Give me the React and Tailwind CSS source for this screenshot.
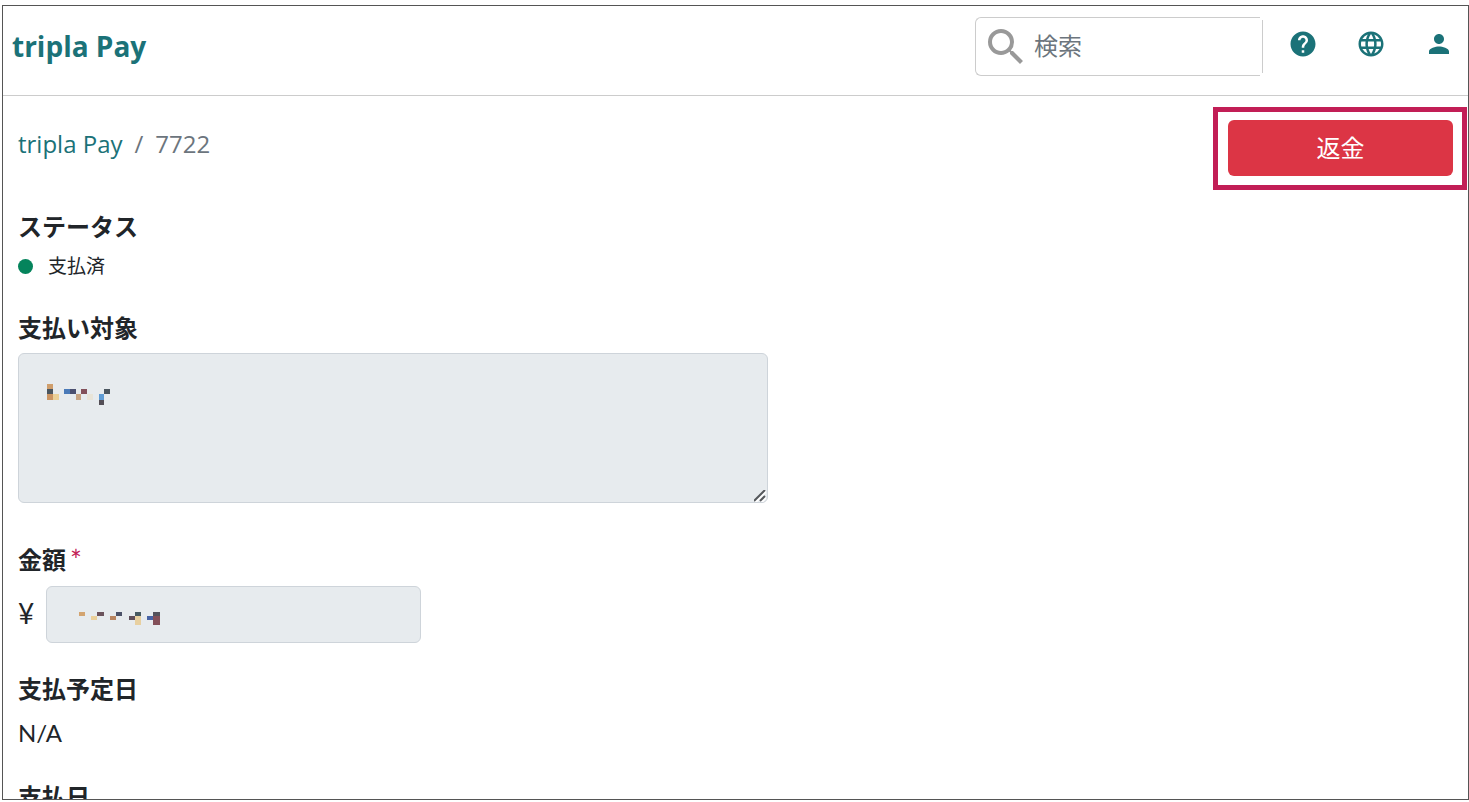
import React, { useState } from "react";
import { MdHelp, MdLanguage, MdPerson, MdSearch } from "react-icons/md";

// masked values: x, y, width, height, colour
const TARGET_MASK = [
  [0, 0, 6, 5, "#cf9e6c"],
  [0, 5, 6, 5, "#4a555f"],
  [0, 10, 6, 6, "#cb9563"],
  [6, 10, 6, 6, "#ebd098"],
  [17, 5, 6, 5, "#4a7ab8"],
  [23, 5, 6, 5, "#4b5070"],
  [29, 10, 5, 6, "#c8a482"],
  [34, 5, 6, 5, "#83505a"],
  [40, 10, 6, 6, "#e8e4d8"],
  [52, 10, 5, 6, "#5f9cd5"],
  [57, 5, 6, 5, "#4a555f"],
  [52, 16, 5, 5, "#534e56"],
];

const AMOUNT_MASK = [
  [0, 0, 6, 4, "#d3a470"],
  [12, 4, 6, 4, "#ebd09a"],
  [18, 0, 7, 4, "#6b535c"],
  [31, 4, 6, 4, "#b98560"],
  [37, 0, 6, 4, "#4b5268"],
  [50, 4, 6, 4, "#5f4e5a"],
  [56, 0, 6, 4, "#475a62"],
  [56, 4, 6, 9, "#e8d0a0"],
  [68, 4, 6, 4, "#4763a5"],
  [74, 0, 7, 4, "#54525c"],
  [74, 4, 7, 9, "#834f58"],
];

function Mask({ cells, className }) {
  return (
    <svg width="84" height="22" shapeRendering="crispEdges" aria-hidden="true" className={`absolute pointer-events-none ${className}`}>
      {cells.map(([x, y, w, h, fill]) => <rect key={`${x}-${y}`} x={x} y={y} width={w} height={h} fill={fill} />)}
    </svg>
  );
}

function IconButton({ label, icon: Icon }) {
  return (
    <button type="button" aria-label={label} className="text-[#1b7278]">
      <Icon size={30} />
    </button>
  );
}

function Header() {
  const [query, setQuery] = useState("");

  return (
    <header className="flex h-[90px] shrink-0 items-start justify-between border-b border-[#cccccc] pl-[9px] pr-[14px]">
      <a href="#" className="mt-[22px] font-['Open_Sans',sans-serif] text-[28px] leading-9 font-bold text-[#1b7278]">tripla Pay</a>
      <div className="flex items-start">
        <div className="mt-[11px] mr-[25px] flex items-center">
          <label className="flex h-[59px] w-[285px] items-center rounded-l-md border border-r-0 border-[#cccccc] pl-[6px]">
            <MdSearch size={48} className="shrink-0 text-[#999999]" />
            <input
              type="search"
              aria-label="検索"
              placeholder="検索"
              value={query}
              onChange={(e) => setQuery(e.target.value)}
              className="min-w-0 flex-1 pb-[2px] pl-1 text-2xl text-[#212529] outline-none placeholder:text-[#6c757d]"
            />
          </label>
          <span className="h-[53px] w-[3px] border-r border-[#cccccc]" />
        </div>
        <div className="mt-[23px] flex gap-[38px]">
          <IconButton label="ヘルプ" icon={MdHelp} />
          <IconButton label="言語" icon={MdLanguage} />
          <IconButton label="アカウント" icon={MdPerson} />
        </div>
      </div>
    </header>
  );
}

export default function App() {
  return (
    <div className="h-screen bg-white pt-[5px] pb-[2px] pl-[2px] font-[Lato,'Noto_Sans_CJK_JP',sans-serif] text-[#212529]">
      <div className="flex h-full flex-col overflow-hidden border border-[#555555]">
        <Header />
        <main className="pt-[11px] pl-[15px]">
          <div className="flex items-start justify-between pr-px">
            <nav aria-label="breadcrumb" className="mt-[19px] flex gap-3 font-['Open_Sans',sans-serif] text-2xl leading-9 text-[#6c757d]">
              <a href="#" className="text-[#1b7278]">tripla Pay</a>
              <span>/</span>
              <span>7722</span>
            </nav>
            <div className="border-[5px] border-[#c21e56] pt-2 pr-[9px] pb-[9px] pl-[10px]">
              <button type="button" className="h-14 w-[225px] rounded-md bg-[#dc3545] text-2xl text-white">返金</button>
            </div>
          </div>

          <h2 className="mt-[19px] text-2xl leading-9 font-bold">ステータス</h2>
          <p className="mt-[6px] flex items-center gap-[15px] text-[19px] leading-[30px]">
            <span className="size-[15px] rounded-full bg-[#05845c]" />
            支払済
          </p>

          <label htmlFor="target" className="mt-[29px] block text-2xl leading-9 font-bold">支払い対象</label>
          <div className="relative mt-[7px] w-fit">
            <textarea id="target" readOnly className="block h-[150px] w-[750px] resize-none rounded-md border border-[#ced4da] bg-[#e7ebee] px-7 py-6 text-2xl" />
            <Mask cells={TARGET_MASK} className="top-[31px] left-[29px]" />
            <svg width="12" height="12" aria-hidden="true" className="pointer-events-none absolute right-[2px] bottom-px">
              <path d="M1 12L12 1M7 12L12 7" stroke="#ffffff" strokeWidth="3" />
              <path d="M0 11L11 0M6 11L11 6" stroke="#55585c" strokeWidth="2" />
            </svg>
          </div>

          <label htmlFor="amount" className="mt-[39px] flex gap-1 text-2xl leading-9 font-bold">
            金額<span className="text-[28px] font-normal text-[#c21e56]">*</span>
          </label>
          <div className="mt-2 flex items-center gap-3">
            <span className="w-4 pb-1 text-[28px] leading-9">¥</span>
            <div className="relative">
              <input id="amount" type="text" readOnly className="block h-[57px] w-[375px] rounded-md border border-[#ced4da] bg-[#e7ebee] px-7 text-2xl" />
              <Mask cells={AMOUNT_MASK} className="top-[26px] left-[33px]" />
            </div>
          </div>

          <h2 className="mt-7 text-2xl leading-9 font-bold">支払予定日</h2>
          <p className="mt-2 text-2xl leading-9">N/A</p>
          <h2 className="mt-7 text-2xl leading-9 font-bold">支払日</h2>
        </main>
      </div>
    </div>
  );
}
